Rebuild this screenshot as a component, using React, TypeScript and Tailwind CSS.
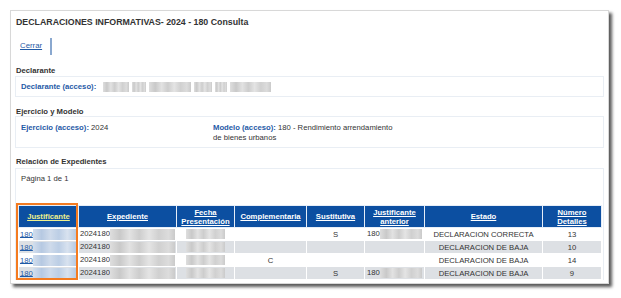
import React from "react";

const blueBlur =
  "inline-block h-[10px] align-middle blur-[0.5px] bg-[linear-gradient(90deg,#d3deed,#b6c9e2_20%,#cfdbeb_40%,#bccee5_60%,#d8e2ef_80%,#b8cbe3)]";
const grayBlur =
  "inline-block h-[10px] align-middle blur-[0.5px] bg-[linear-gradient(90deg,#dedede,#c9c9c9_15%,#e2e2e2_30%,#cdcdcd_45%,#e4e4e4_60%,#d0d0d0_75%,#dcdcdc_90%,#cacaca)]";

type Row = {
  comp: string;
  sust: string;
  ant: boolean;
  estado: string;
  num: string;
  gray: boolean;
};

const rows: Row[] = [
  { comp: "", sust: "S", ant: true, estado: "DECLARACION CORRECTA", num: "13", gray: false },
  { comp: "", sust: "", ant: false, estado: "DECLARACION DE BAJA", num: "10", gray: true },
  { comp: "C", sust: "", ant: false, estado: "DECLARACION DE BAJA", num: "14", gray: false },
  { comp: "", sust: "S", ant: true, estado: "DECLARACION DE BAJA", num: "9", gray: true },
];

function Th({ children, yellow }: { children: React.ReactNode; yellow?: boolean }) {
  return (
    <th
      className={`border border-[#e6eef8] bg-[#0c4fa1] px-[2px] text-center align-middle font-bold underline leading-[9px] ${
        yellow ? "text-[#eef08c]" : "text-white"
      }`}
    >
      {children}
    </th>
  );
}

export default function App() {
  return (
    <div className="w-[621px] h-[298px] bg-white font-['Liberation_Sans',Arial,sans-serif] text-[#333] overflow-hidden">
      <div className="ml-[10px] mt-[10px] w-[599px] h-[274px] border border-[#d8d8d8] bg-white shadow-[3px_3px_3px_rgba(0,0,0,0.65)] px-[4px]">
        {/* title */}
        <div className="h-[24px] flex items-center pl-[1px] text-[8.8px] font-bold text-[#333]">
          DECLARACIONES INFORMATIVAS- 2024 - 180 Consulta
        </div>
        {/* Cerrar */}
        <div className="h-[22px] flex items-center pl-[5px]">
          <span className="text-[7.8px] text-[#1f5aa6] underline">Cerrar</span>
          <span className="ml-[8px] w-[2px] h-[17px] bg-[#8aa8cf]" />
        </div>
        {/* Declarante */}
        <div className="h-[19px] pt-[9px] pl-[1px] text-[7.7px] font-bold leading-[10px] text-[#333]">
          Declarante
        </div>
        <div className="h-[21px] border border-[#e9eef4] flex items-center pl-[5px] text-[7.7px]">
          <span className="font-bold text-[#1f5aa6]">Declarante (acceso):</span>
          <span className="ml-[7px] flex gap-[3px] items-center">
            <span className={`${grayBlur} w-[26px]`} />
            <span className={`${grayBlur} w-[14px]`} />
            <span className={`${grayBlur} w-[42px]`} />
            <span className={`${grayBlur} w-[18px]`} />
            <span className={`${grayBlur} w-[12px]`} />
            <span className={`${grayBlur} w-[41px]`} />
          </span>
        </div>
        {/* Ejercicio y Modelo */}
        <div className="h-[19px] pt-[10px] pl-[1px] text-[7.7px] font-bold leading-[10px] text-[#333]">
          Ejercicio y Modelo
        </div>
        <div className="h-[32px] border border-[#e9eef4] flex pt-[6px] pl-[5px] text-[7.7px] leading-[10px]">
          <div className="w-[192px]">
            <span className="font-bold text-[#1f5aa6]">Ejercicio (acceso):</span> 2024
          </div>
          <div className="w-[200px]">
            <span className="font-bold text-[#1f5aa6]">Modelo (acceso):</span> 180 - Rendimiento arrendamiento
            <br />
            de bienes urbanos
          </div>
        </div>
        {/* Relación */}
        <div className="h-[20px] pt-[9px] pl-[1px] text-[7.7px] font-bold leading-[10px] text-[#333]">
          Relación de Expedientes
        </div>
        <div className="border border-[#e9eef4] border-b-0 pl-[2px] pr-[3px]">
          <div className="pt-[5px] pl-[3px] text-[7.7px] leading-[10px] h-[36px]">Página 1 de 1</div>
          <div className="relative">
            <table className="table-fixed border-collapse w-[583px] text-[7.7px] leading-[9px]">
              <colgroup>
                <col className="w-[60px]" />
                <col className="w-[98px]" />
                <col className="w-[58px]" />
                <col className="w-[72px]" />
                <col className="w-[58px]" />
                <col className="w-[60px]" />
                <col className="w-[118px]" />
                <col className="w-[59px]" />
              </colgroup>
              <thead>
                <tr className="h-[22px]">
                  <Th yellow>Justificante</Th>
                  <Th>Expediente</Th>
                  <Th>
                    Fecha
                    <br />
                    Presentación
                  </Th>
                  <Th>Complementaria</Th>
                  <Th>Sustitutiva</Th>
                  <Th>
                    Justificante
                    <br />
                    anterior
                  </Th>
                  <Th>Estado</Th>
                  <Th>
                    Número
                    <br />
                    Detalles
                  </Th>
                </tr>
              </thead>
              <tbody>
                {rows.map((r, i) => (
                  <tr key={i} className={`h-[13px] ${r.gray ? "bg-[#dde0e4]" : "bg-white"} text-[#333]`}>
                    <td className="border border-white px-[1px] whitespace-nowrap overflow-hidden">
                      <span className="text-[#1f5aa6] underline">180</span>
                      <span className={`${blueBlur} w-[43px] h-[11px]`} />
                    </td>
                    <td className="border border-white px-0 whitespace-nowrap overflow-hidden">
                      <span className="pl-[1px]">2024180</span>
                      <span className={`${grayBlur} w-[65px] h-[11px]`} />
                    </td>
                    <td className="border border-white text-center">
                      <span className={`${grayBlur} w-[39px]`} />
                    </td>
                    <td className="border border-white text-center">{r.comp}</td>
                    <td className="border border-white text-center">{r.sust}</td>
                    <td className="border border-white px-[2px] whitespace-nowrap overflow-hidden">
                      {r.ant && (
                        <>
                          <span>180</span>
                          <span className={`${grayBlur} w-[42px]`} />
                        </>
                      )}
                    </td>
                    <td className="border border-white text-center whitespace-nowrap">{r.estado}</td>
                    <td className="border border-white text-center">{r.num}</td>
                  </tr>
                ))}
              </tbody>
            </table>
            <div className="absolute left-[-2px] top-[-2px] w-[62px] h-[77px] border-2 border-[#f47b20] pointer-events-none" />
          </div>
        </div>
      </div>
    </div>
  );
}
